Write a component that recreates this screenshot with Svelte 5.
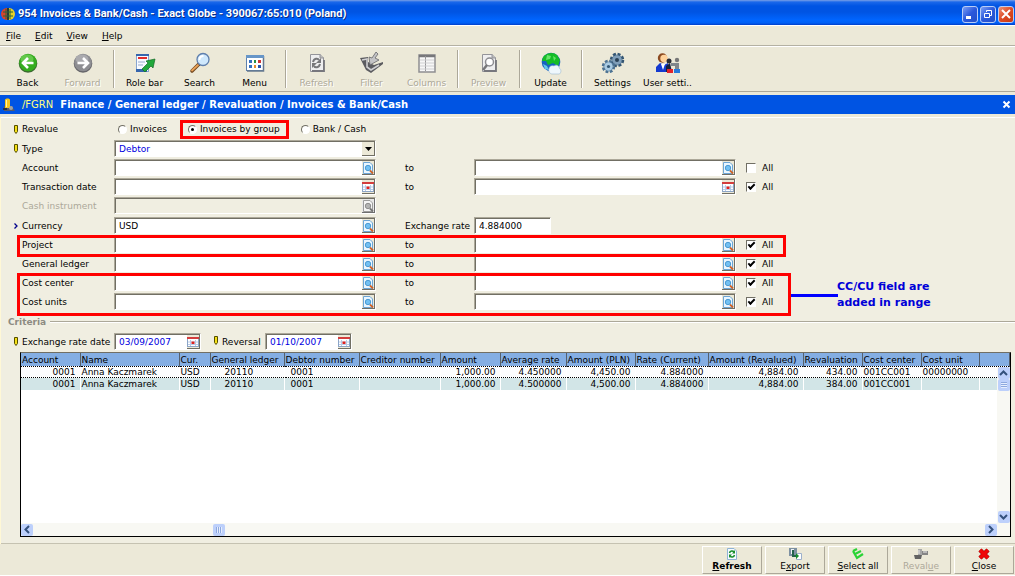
<script>
    const menus = ["File", "Edit", "View", "Help"];

    const tools = [
        { icon: "back", label: "Back" },
        { icon: "forward", label: "Forward", disabled: true },
        null,
        { icon: "role", label: "Role bar" },
        { icon: "search", label: "Search" },
        { icon: "menu", label: "Menu" },
        null,
        { icon: "refresh", label: "Refresh", disabled: true },
        { icon: "filter", label: "Filter", disabled: true },
        { icon: "columns", label: "Columns", disabled: true },
        null,
        { icon: "preview", label: "Preview", disabled: true },
        null,
        { icon: "update", label: "Update" },
        null,
        { icon: "settings", label: "Settings" },
        { icon: "users", label: "User setti.." }
    ];

    const columns = [
        { name: "Account", width: 59, right: true },
        { name: "Name", width: 99 },
        { name: "Cur.", width: 31 },
        { name: "General ledger", width: 74, indent: true },
        { name: "Debtor number", width: 75, indentSmall: true },
        { name: "Creditor number", width: 81 },
        { name: "Amount", width: 60, right: true },
        { name: "Average rate", width: 66, right: true },
        { name: "Amount (PLN)", width: 69, right: true },
        { name: "Rate (Current)", width: 73, right: true },
        { name: "Amount (Revalued)", width: 95, right: true },
        { name: "Revaluation", width: 59, right: true },
        { name: "Cost center", width: 59 },
        { name: "Cost unit", width: 58 }
    ];

    const rows = [
        ["0001", "Anna Kaczmarek", "USD", "20110", "0001", "", "1,000.00", "4.450000", "4,450.00", "4.884000", "4,884.00", "434.00", "001CC001", "00000000"],
        ["0001", "Anna Kaczmarek", "USD", "20110", "0001", "", "1,000.00", "4.500000", "4,500.00", "4.884000", "4,884.00", "384.00", "001CC001", ""]
    ];

    const actions = [
        { icon: "refresh", before: "", key: "R", after: "efresh", main: true },
        { icon: "export", before: "E", key: "x", after: "port" },
        { icon: "select", before: "", key: "S", after: "elect all" },
        { icon: "revalue", before: "Reval", key: "u", after: "e", disabled: true },
        { icon: "close", before: "", key: "C", after: "lose" }
    ];

    let revalue = "group";
    let all = { account: false, date: true, project: true, ledger: true, center: true, units: true };
</script>

<svelte:head>
    <title>954 Invoices & Bank/Cash</title>
</svelte:head>

{#snippet toolIcon(name)}
    <svg width="22" height="22" viewBox="0 0 22 22" aria-hidden="true">
        {#if name === "back" || name === "forward"}
            <circle cx="11" cy="11.5" r="9.3" fill={name === "back" ? "#3b6a30" : "#66666a"} />
            <circle cx="11" cy="10.5" r="8.8" fill={name === "back" ? "#35ad1f" : "#8e8e92"} />
            <ellipse cx="10" cy="7" rx="6.5" ry="4.5" fill={name === "back" ? "#76d35c" : "#b7b7ba"} opacity="0.7" />
            {#if name === "back"}
                <path d="M16.5 11H7M11 6L6 11L11 16" fill="none" stroke="#fff" stroke-width="2.6" />
            {:else}
                <path d="M5.5 11H15M11 6L16 11L11 16" fill="none" stroke="#fff" stroke-width="2.6" />
            {/if}
        {:else if name === "role"}
            <rect x="2.5" y="2.5" width="12" height="17" fill="#f7faff" stroke="#87a4cf" />
            <rect x="2" y="2" width="13" height="2" fill="#3565ad" />
            <rect x="4" y="5" width="9" height="2" fill="#e02b2b" />
            <path d="M4 10h7M4 13h5" stroke="#9aabcc" />
            <rect x="2" y="17" width="11" height="3" fill="#3565ad" />
            <path d="M12 9L21 7L19 16L17 14L11 20L8 17L14 11Z" fill="#21a83b" stroke="#126a25" stroke-width="0.7" />
        {:else if name === "search"}
            <path d="M10 12L3 19" stroke="#70451e" stroke-width="3.5" stroke-linecap="round" />
            <path d="M9 13L3 18.5" stroke="#e9a257" stroke-width="1.8" stroke-linecap="round" />
            <circle cx="14" cy="7.5" r="6" fill="#cfe8fc" stroke="#5f7fac" stroke-width="1.3" />
            <path d="M10.5 8c0-3 2-4 4-4" stroke="#fff" stroke-width="1.8" fill="none" />
        {:else if name === "menu"}
            <rect x="2.5" y="3.5" width="17" height="15" fill="#fff" stroke="#5d80ae" />
            <path d="M19.5 4V19H3" fill="none" stroke="#66798f" stroke-width="1.5" />
            <rect x="2" y="3" width="18" height="3" fill="#6796c8" />
            <path d="M5 8h3v3h-3zM5 13h3v3h-3z" fill="#346fc0" />
            <path d="M10 8h2v3h-2z" fill="#269146" /><path d="M10 13h2v3h-2z" fill="#e68c2d" />
            <path d="M14 8h3v3h-3z" fill="#cf3535" /><path d="M14 13h3v3h-3z" fill="#2a55b0" />
        {:else if name === "refresh" || name === "preview"}
            <path d="M4.5 2.5H14L17.5 6V19.5H4.5Z" fill="#eeeeef" stroke="#949499" />
            <path d="M14 2V6H18" fill="#bbb" stroke="#949499" />
            <path d="M18 8V19H6" fill="none" stroke="#77777d" stroke-width="1.8" />
            {#if name === "refresh"}
                <path d="M7 10C8 6 12 6 13 8M14 12C13 16 9 16 8 14" fill="none" stroke="#77777a" stroke-width="2" />
                <path d="M15 6V11H10ZM6 16V11H11Z" fill="#77777a" />
            {:else}
                <circle cx="11.5" cy="10" r="4" fill="#fff" stroke="#8c8c90" stroke-width="1.5" />
                <path d="M9 13L5 18" stroke="#77777a" stroke-width="2.5" />
            {/if}
        {:else if name === "filter"}
            <path d="M-1 6L7 5L7 10L13 13L22 10L22 12L10 21L5 18Z" fill="#5c5c60" />
            <path d="M1 8L6 7L6 15L10 18L18 13" fill="none" stroke="#cfcfd1" stroke-width="1.6" />
            <path d="M15 0L17 2L14 6L18 8L9 13L8 5L11 6Z" fill="#c4c4c6" stroke="#66666a" stroke-width="0.8" />
        {:else if name === "columns"}
            <rect x="3" y="3" width="16" height="17" fill="#f7f7f7" stroke="#8e8e91" stroke-width="1.5" />
            <path d="M3 4H19" stroke="#77777a" stroke-width="2.5" />
            <path d="M9.5 4V19" stroke="#949497" />
            <path d="M4 8H18M4 11H18M4 14H18M4 17H18" stroke="#cfcfd1" />
        {:else if name === "update"}
            <circle cx="11" cy="10" r="9.3" fill="#1763c0" />
            <path d="M3 5C7 0 14 0 17 3L20 8L18 14L13 11L8 13L6 9L2 9Z" fill="#15bd27" />
            <path d="M7 3L11 4L10 7L6 8ZM13 4L16 6L14 9Z" fill="#67e56b" />
            <path d="M3 12L7 14L9 18L5 17Z" fill="#67c9e9" />
            <path d="M9 17c0-3 3-4 5-3c2-2 6 0 5 2c3 1 2 6 0 6h-7c-2 0-4-3-3-5" fill="#eef7fc" stroke="#9bb8d0" stroke-width="0.6" />
        {:else if name === "settings"}
            <circle cx="15" cy="8" r="5.5" fill="#6487a6" stroke="#345673" stroke-width="3.5" stroke-dasharray="2.7 1.6" />
            <circle cx="15" cy="8" r="4.8" fill="#7f9eb9" />
            <circle cx="15" cy="8" r="2" fill="#294157" />
            <circle cx="6.5" cy="14.5" r="5" fill="#648db1" stroke="#4c7292" stroke-width="3.5" stroke-dasharray="2.5 1.43" />
            <circle cx="6.5" cy="14.5" r="4.2" fill="#a9cbe3" />
            <circle cx="6.5" cy="14.5" r="1.6" fill="#315877" />
        {:else if name === "users"}
            <circle cx="5.5" cy="6" r="4.7" fill="#8c4a20" />
            <circle cx="7" cy="6.5" r="3.7" fill="#ffd29b" />
            <path d="M-1 20V15L3 11L7 13L11 11V20Z" fill="#143ad0" />
            <path d="M4 12L8 12L6 18Z" fill="#fff" />
            <circle cx="12" cy="9" r="2.5" fill="#292b32" />
            <path d="M9 20V14L13 11L15 20Z" fill="#17213d" />
            <path d="M10 17h6v4h-6z" fill="#e3222b" />
            <circle cx="20" cy="8" r="2.2" fill="#777" />
            <path d="M18 11h4v6h-4zM14 11h5v3h-5z" fill="#81878b" />
            <path d="M17 17h6v4h-6z" fill="#287bdc" />
        {/if}
    </svg>
{/snippet}

{#snippet lookup(kind, label, disabled)}
    <button type="button" class="lookup" class:dim={disabled} aria-label={label} {disabled}>
        <svg width="12" height="12" viewBox="0 0 12 12">
            {#if kind === "date"}
                <rect x="0.5" y="1.5" width="11" height="9" fill="#fff" stroke="#8ca5c7" />
                <path d="M0 1h12v2h-12z" fill="#d33d3d" />
                <path d="M1 6H11M1 8.5H11M3.5 4V10M8.5 4V10" stroke="#b7cbe8" />
                <path d="M4.5 5.5h3v2.5h-3z" fill="#dc2222" />
            {:else}
                <path d="M1.5 0.5H8L10.5 3V11.5H1.5Z" fill="#e9f6ff" stroke="#6da5d5" />
                <circle cx="6" cy="6" r="2.7" fill="#72c0f2" stroke="#4b9bd3" />
                <path d="M8 8.5L11 11.5" stroke="#cf642a" stroke-width="1.8" />
            {/if}
        </svg>
    </button>
{/snippet}

{#snippet range(id, label, kind)}
    <div class="row">
        <label class="name" for={id}>{label}</label>
        <div class="field"><input {id} type="text" />{@render lookup(kind, "Find " + label, false)}</div>
        <label class="to" for={id + "-to"}>to</label>
        <div class="field"><input id={id + "-to"} type="text" />{@render lookup(kind, "Find last " + label, false)}</div>
        <label class="all"><input type="checkbox" bind:checked={all[id]} />All</label>
    </div>
{/snippet}

{#snippet required()}
    <svg class="mark" width="4" height="9" viewBox="0 0 4 9" aria-hidden="true">
        <path d="M0.5 0.5h3v6l-1.5 2l-1.5-2z" fill="#f4df16" stroke="#554f00" />
    </svg>
{/snippet}

<div class="window">
    <header class="titlebar">
        <svg width="12" height="14" viewBox="0 0 12 14" aria-hidden="true">
            <circle cx="6" cy="7" r="6" fill="#263a35" />
            <path d="M5 1A6 6 0 0 0 5 13Z" fill="#d7432d" />
            <path d="M7 1A6 6 0 0 1 7 13Z" fill="#e9d328" />
            <path d="M1 5H11M1 9H11M4 2V12M8 2V12" stroke="#29633a" stroke-width="1" />
        </svg>
        <h1>954 Invoices &amp; Bank/Cash - Exact Globe - 390067:65:010 (Poland)</h1>
        <button type="button" class="caption" aria-label="Minimize">
            <svg width="14" height="14"><path d="M3 10.5H8" stroke="#fff" stroke-width="3" /></svg>
        </button>
        <button type="button" class="caption" aria-label="Restore">
            <svg width="14" height="14"><path d="M5.5 5V3.5H10.5V8.5H9M3.5 6.5H8.5V10.5H3.5Z" fill="none" stroke="#fff" /></svg>
        </button>
        <button type="button" class="caption red" aria-label="Close window">
            <svg width="14" height="14"><path d="M3 3L11 11M11 3L3 11" stroke="#fff" stroke-width="2" /></svg>
        </button>
    </header>

    <nav class="menubar">
        {#each menus as menu}
            <button type="button"><u>{menu[0]}</u>{menu.slice(1)}</button>
        {/each}
    </nav>

    <div class="toolbar">
        {#each tools as tool}
            {#if tool}
                <button type="button" class="tool" disabled={tool.disabled}>
                    {@render toolIcon(tool.icon)}
                    <span>{tool.label}</span>
                </button>
            {:else}
                <i class="separator"></i>
            {/if}
        {/each}
    </div>

    <div class="pathbar">
        <svg width="14" height="14" viewBox="0 0 14 14" aria-hidden="true">
            <path d="M2 8h8l3 5h-11z" fill="#555b6d" />
            <path d="M3 2c0-2 5-2 5 0v8h-5z" fill="#f5c51d" />
            <path d="M4.5 2v7" stroke="#fff3a6" />
            <path d="M1 10h4v2h-4z" fill="#26304b" /><circle cx="9" cy="10" r="2" fill="#a0a3a6" />
        </svg>
        <span class="code">/FGRN</span>
        <h2>Finance / General ledger / Revaluation / Invoices &amp; Bank/Cash</h2>
        <button type="button" aria-label="Close page">
            <svg width="9" height="9"><path d="M1.5 1.5L7.5 7.5M7.5 1.5L1.5 7.5" stroke="#fff" stroke-width="2" /></svg>
        </button>
    </div>

    <main>
        <form>
            <div class="group">
                <div class="row first">
                    {@render required()}
                    <span class="name" id="revalue">Revalue</span>
                    <div class="radios" role="radiogroup" aria-labelledby="revalue">
                        <label><input type="radio" name="revalue" value="invoices" bind:group={revalue} />Invoices</label>
                        <label class="marked"><input type="radio" name="revalue" value="group" bind:group={revalue} />Invoices by group</label>
                        <label><input type="radio" name="revalue" value="bank" bind:group={revalue} />Bank / Cash</label>
                    </div>
                </div>
                <div class="row">
                    {@render required()}
                    <label class="name" for="type">Type</label>
                    <div class="field">
                        <select id="type"><option>Debtor</option></select>
                        <span class="lookup arrow"><svg width="7" height="4"><path d="M0 0H7L3.5 4Z" /></svg></span>
                    </div>
                </div>
                {@render range("account", "Account", "find")}
                {@render range("date", "Transaction date", "date")}
                <div class="row">
                    <label class="name off" for="cash">Cash instrument</label>
                    <div class="field off"><input id="cash" type="text" disabled />{@render lookup("find", "Find cash instrument", true)}</div>
                </div>
            </div>
            <div class="group">
                <div class="row">
                    <svg class="mark" width="4" height="6" aria-hidden="true"><path d="M0.5 0.5L3 3L0.5 5.5" fill="none" stroke="#00008b" stroke-width="1.3" /></svg>
                    <label class="name" for="currency">Currency</label>
                    <div class="field"><input id="currency" type="text" value="USD" />{@render lookup("find", "Find currency", false)}</div>
                    <label class="to" for="rate">Exchange rate</label>
                    <div class="field rate"><input id="rate" type="text" value="4.884000" /></div>
                </div>
                <div class="callout">{@render range("project", "Project", "find")}</div>
                {@render range("ledger", "General ledger", "find")}
                <div class="callout wide">
                    {@render range("center", "Cost center", "find")}
                    {@render range("units", "Cost units", "find")}
                    <p class="note">CC/CU field are<br />added in range</p>
                </div>
            </div>

            <h3>Criteria</h3>
            <div class="group">
                <div class="row">
                    {@render required()}
                    <label class="name" for="rate-date">Exchange rate date</label>
                    <div class="field short"><input id="rate-date" class="blue" type="text" value="03/09/2007" />{@render lookup("date", "Pick exchange rate date", false)}</div>
                    <div class="reversal">
                        {@render required()}
                        <label for="reversal">Reversal</label>
                    </div>
                    <div class="field short"><input id="reversal" class="blue" type="text" value="01/10/2007" />{@render lookup("date", "Pick reversal date", false)}</div>
                </div>
            </div>
        </form>

        <div class="grid">
            <div class="sheet">
                <table>
                    <colgroup>
                        {#each columns as column}
                            <col style={"width:" + column.width + "px"} />
                        {/each}
                        <col />
                    </colgroup>
                    <thead>
                        <tr>
                            {#each columns as column}
                                <th>{column.name}</th>
                            {/each}
                            <th></th>
                        </tr>
                    </thead>
                    <tbody>
                        {#each rows as row, i}
                            <tr class:current={i === 0}>
                                {#each row as cell, c}
                                    <td class:right={columns[c].right} class:indent={columns[c].indent} class:small={columns[c].indentSmall}>{cell}</td>
                                {/each}
                                <td></td>
                            </tr>
                        {/each}
                    </tbody>
                </table>
                <div class="scroll vertical">
                    <button type="button" aria-label="Scroll up"><svg width="9" height="6"><path d="M1 5L4.5 1.5L8 5" /></svg></button>
                    <i class="thumb"></i>
                    <button type="button" class="end" aria-label="Scroll down"><svg width="9" height="6"><path d="M1 1L4.5 4.5L8 1" /></svg></button>
                </div>
            </div>
            <div class="scroll horizontal">
                <button type="button" aria-label="Scroll left"><svg width="6" height="9"><path d="M5 1L1.5 4.5L5 8" /></svg></button>
                <i class="thumb"></i>
                <button type="button" class="end" aria-label="Scroll right"><svg width="6" height="9"><path d="M1 1L4.5 4.5L1 8" /></svg></button>
            </div>
        </div>
    </main>

    <footer>
        {#each actions as action}
            <button type="button" class:main={action.main} disabled={action.disabled}>
                <svg width="14" height="12" viewBox="0 0 14 12" aria-hidden="true">
                    {#if action.icon === "refresh"}
                        <path d="M2.5 0.5H9L11.5 3V11.5H2.5Z" fill="#f6fbff" stroke="#8fb3d5" />
                        <path d="M4.5 5C5 2.5 8 2.5 9 4M9.5 7C9 9.5 6 9.5 5 8" fill="none" stroke="#168e2b" stroke-width="1.5" />
                        <path d="M10 2V5.5H7ZM4 10V6.5H7Z" fill="#168e2b" />
                    {:else if action.icon === "export"}
                        <path d="M1 0h8v8h-8z" fill="#7e91a2" /><path d="M3 1h3v5h-3z" fill="#eef4f7" />
                        <path d="M8.5 5.5h5v6h-5z" fill="#fff" stroke="#9cb0cb" />
                        <path d="M5 2V8H8" fill="none" stroke="#24624b" stroke-width="2" /><path d="M8 5L11 8L8 11Z" fill="#168e2b" />
                    {:else if action.icon === "select"}
                        <path d="M2 3L6 10L12 6M4 6L10 3M2 3L6 1" stroke="#2bd336" stroke-width="2.2" fill="none" />
                    {:else if action.icon === "revalue"}
                        <path d="M0 7h8l-1 4h-6z" fill="#626262" /><path d="M4 1h4v6h-4z" fill="#a7a7a7" />
                        <path d="M8 3h6v4h-6z" fill="#858585" /><path d="M5 2v4M9 4h4" stroke="#eee" />
                    {:else}
                        <path d="M3 2L11 10M11 2L3 10" stroke="#900" stroke-width="4.5" />
                        <path d="M3 2L11 10M11 2L3 10" stroke="#f00808" stroke-width="3.3" />
                    {/if}
                </svg>
                <span>{action.before}<u>{action.key}</u>{action.after}</span>
            </button>
        {/each}
    </footer>
</div>

<style>
    :global(body) {
        background: #ece9d8;
    }

    .window {
        display: flex;
        flex-direction: column;
        min-height: 100vh;
        box-sizing: border-box;
        border-bottom: 1px solid #fff;
        background: #ece9d8;
        color: #000;
        font-family: "DejaVu Sans", Verdana, sans-serif;
        font-size: 9px;
        line-height: 12px;
    }

    button, input, select {
        margin: 0;
        padding: 0;
        border: 0;
        background: none;
        color: inherit;
        font: inherit;
        outline: none;
    }

    svg {
        display: block;
        flex: none;
        overflow: visible;
    }

    h1, h2, h3, p {
        margin: 0;
    }

    .titlebar {
        display: flex;
        align-items: center;
        gap: 2px;
        height: 25px;
        padding: 3px 1px 0 2px;
        box-sizing: border-box;
        background: linear-gradient(#7ba0e6 0, #1b68ea 2px, #0054e3 6px, #0054e3 12px, #0065ff 20px, #0060f5 23px, #003dc8 25px);
        color: #fff;
    }

    h1 {
        flex: 1;
        padding-left: 2px;
        font-family: Roboto, "Open Sans", sans-serif;
        font-size: 11px;
        font-weight: 700;
        text-shadow: 1px 1px #0a2a80;
        white-space: nowrap;
    }

    .caption {
        display: grid;
        place-items: center;
        width: 16px;
        height: 17px;
        box-sizing: border-box;
        border: 1px solid #b9cdf6;
        border-radius: 3px;
        background: linear-gradient(135deg, #7c9ef4, #2a58dc 50%, #2350c8);
    }

    .caption.red {
        background: linear-gradient(135deg, #ee9377, #dd4a24 50%, #c8370f);
    }

    .menubar {
        display: flex;
        gap: 14px;
        height: 21px;
        padding: 0 6px;
        box-sizing: border-box;
        border-top: 1px solid #fff;
        border-bottom: 1px solid #b4b1a3;
    }

    .toolbar {
        display: flex;
        height: 46px;
        box-sizing: border-box;
        border-top: 1px solid #fff;
        border-bottom: 1px solid #aca899;
    }

    .tool {
        display: flex;
        flex-direction: column;
        align-items: center;
        gap: 3px;
        width: 55px;
        padding-top: 5px;
        white-space: nowrap;
    }

    .tool:disabled {
        color: #aca899;
        text-shadow: 1px 1px #fff;
    }

    .separator {
        width: 1px;
        height: 38px;
        margin: 3px 2px 0 3px;
        border-right: 1px solid #fff;
        background: #aca899;
    }

    .pathbar {
        display: flex;
        align-items: center;
        height: 19px;
        margin-top: 3px;
        padding: 0 4px 0 2px;
        box-sizing: border-box;
        background: #0054e3;
        color: #fff;
        font-weight: 700;
    }

    .code {
        padding: 0 7px 0 6px;
        color: #ffff80;
        font-size: 10px;
        font-weight: 400;
    }

    h2 {
        flex: 1;
        font-size: 10px;
        white-space: nowrap;
    }

    main {
        display: flex;
        flex: 1;
        flex-direction: column;
        margin: 3px 0 0 1px;
        padding-bottom: 6px;
        border-top: 1px solid #fff;
        border-bottom: 1px solid #c5c2b1;
        background: #f0eee1;
        box-shadow: -1px 0 #fff8d6;
    }

    form {
        display: flex;
        flex-direction: column;
        gap: 1px;
        padding-top: 1px;
    }

    .group {
        padding-left: 21px;
    }

    .row {
        position: relative;
        display: flex;
        align-items: center;
        height: 19px;
    }

    .row.first {
        height: 20px;
    }

    .mark {
        position: absolute;
        left: -8px;
    }

    .name {
        width: 92px;
        white-space: nowrap;
    }

    .name.off {
        color: #aca899;
    }

    .field {
        display: flex;
        width: 262px;
        height: 17px;
        padding: 1px 0 0 1px;
        box-sizing: border-box;
        border: 1px solid #fff;
        border-top-color: #aca899;
        border-left-color: #aca899;
        background: #fff;
        box-shadow: inset 1px 1px #716f64;
    }

    .field.off {
        background: #f0eee1;
    }

    .field.rate {
        width: 77px;
    }

    .field.short {
        width: 87px;
    }

    .field input, .field select {
        flex: 1;
        min-width: 0;
        padding-left: 3px;
        appearance: none;
    }

    .field select, .field .blue {
        color: #0000e0;
    }

    .lookup {
        display: grid;
        place-items: center;
        width: 13px;
        box-sizing: border-box;
        border-right: 1px solid #716f64;
        border-bottom: 1px solid #716f64;
        background: #ece9d8;
    }

    .lookup.dim {
        filter: grayscale(1);
    }

    .arrow {
        pointer-events: none;
    }

    .to {
        width: 69px;
        margin-left: 29px;
        white-space: nowrap;
    }

    .all {
        display: flex;
        align-items: center;
        gap: 6px;
        margin-left: 10px;
    }

    input[type="checkbox"], input[type="radio"] {
        display: grid;
        place-items: center;
        width: 10px;
        height: 10px;
        box-sizing: border-box;
        border: 1px solid #fff;
        border-top-color: #716f64;
        border-left-color: #716f64;
        background: #fff;
        appearance: none;
    }

    input[type="checkbox"]:checked::after {
        width: 7px;
        height: 4px;
        margin-bottom: 2px;
        border: solid #000;
        border-width: 0 0 2px 2px;
        box-sizing: border-box;
        content: "";
        rotate: -45deg;
    }

    input[type="radio"] {
        width: 9px;
        height: 9px;
        border-radius: 50%;
    }

    input[type="radio"]:checked::after {
        width: 3px;
        height: 3px;
        border-radius: 50%;
        background: #000;
        content: "";
    }

    .radios {
        display: flex;
        align-items: center;
    }

    .radios label {
        display: flex;
        align-items: center;
        gap: 3px;
        padding: 0 13px 0 4px;
        white-space: nowrap;
    }

    .radios .marked {
        height: 19px;
        margin-right: 8px;
        padding: 0 6px 0 5px;
        box-sizing: border-box;
        border: 3px solid #f00;
    }

    .callout {
        position: relative;
    }

    .callout::before {
        position: absolute;
        top: 0;
        bottom: -3px;
        left: -5px;
        z-index: 1;
        width: 763px;
        border: 3px solid #f00;
        content: "";
        pointer-events: none;
    }

    .callout.wide::before {
        bottom: -5px;
        width: 768px;
    }

    .note {
        position: absolute;
        top: 6px;
        left: 769px;
        padding-left: 46px;
        color: #0000d8;
        font-size: 11px;
        font-weight: 700;
        line-height: 16px;
        white-space: nowrap;
    }

    .note::before {
        position: absolute;
        top: 15px;
        left: 0;
        width: 47px;
        height: 3px;
        background: #00f;
        content: "";
    }

    h3 {
        display: flex;
        align-items: center;
        gap: 4px;
        height: 19px;
        padding-left: 7px;
        color: #8d8b82;
        font-size: 9px;
    }

    h3::after {
        flex: 1;
        height: 1px;
        border-bottom: 1px solid #fff;
        background: #aca899;
        content: "";
    }

    .reversal {
        position: relative;
        width: 43px;
        margin-left: 21px;
    }

    .grid {
        display: flex;
        flex: 1;
        flex-direction: column;
        margin: 1px 4px 0 19px;
        border: 1px solid #000;
        border-top-color: #716f64;
        background: #fff;
    }

    .sheet {
        position: relative;
        flex: 1;
    }

    table {
        width: 100%;
        border-collapse: collapse;
        table-layout: fixed;
    }

    th, td {
        height: 12px;
        padding: 0 4px 0 1px;
        overflow: hidden;
        border-right: 1px solid #fff;
        font-weight: 400;
        line-height: 12px;
        text-align: left;
        white-space: nowrap;
    }

    th {
        height: 13px;
        padding-right: 0;
        border-right: 1px solid #55606e;
        background: #84aee3;
    }

    tbody tr {
        background: #d2e5e7;
    }

    tbody .current {
        background: #fcfdfe;
    }

    .current td {
        height: 10px;
        border-top: 1px dotted #000;
        border-bottom: 1px dotted #000;
        line-height: 10px;
    }

    .right {
        text-align: right;
    }

    .indent {
        padding-left: 14px;
    }

    .small {
        padding-left: 6px;
    }

    .scroll {
        display: flex;
        align-items: center;
        background: #f8f8f3;
    }

    .vertical {
        position: absolute;
        top: 14px;
        right: 0;
        bottom: 0;
        flex-direction: column;
        width: 13px;
    }

    .horizontal {
        height: 13px;
        padding-right: 13px;
    }

    .scroll button, .thumb {
        display: grid;
        place-items: center;
        width: 12px;
        height: 12px;
        border-radius: 2px;
        background: #bdd0fb;
    }

    .scroll path {
        fill: none;
        stroke: #34517c;
        stroke-width: 2;
    }

    .scroll .end {
        margin-top: auto;
    }

    .horizontal .end {
        margin: 0 0 0 auto;
    }

    .thumb::after {
        width: 6px;
        height: 6px;
        background: repeating-linear-gradient(#8ea9df 0 1px, #e6eefe 1px 2px);
        content: "";
    }

    .horizontal .thumb {
        margin-left: 180px;
    }

    .horizontal .thumb::after {
        background: repeating-linear-gradient(90deg, #8ea9df 0 1px, #e6eefe 1px 2px);
    }

    footer {
        display: flex;
        justify-content: flex-end;
        gap: 3px;
        padding: 2px 1px 1px 0;
    }

    footer button {
        display: flex;
        flex-direction: column;
        align-items: center;
        width: 60px;
        height: 28px;
        padding-top: 1px;
        box-sizing: border-box;
        border: 1px solid #fff;
        border-right-color: #aca899;
        border-bottom-color: #aca899;
        white-space: nowrap;
    }

    footer .main {
        font-weight: 700;
    }

    footer button:disabled {
        color: #aca899;
    }
</style>
